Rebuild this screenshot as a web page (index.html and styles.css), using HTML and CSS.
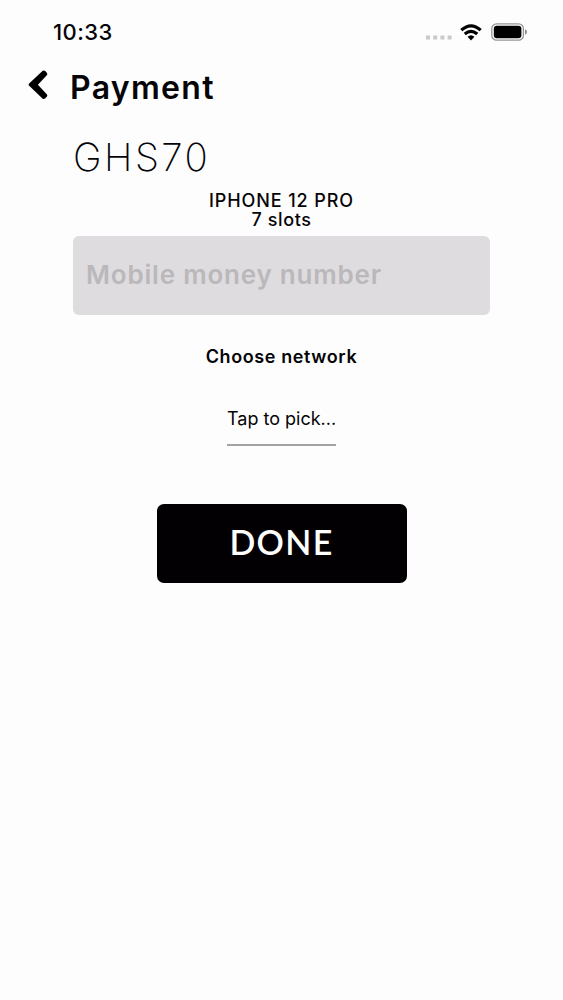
FILE: index.html
```html
<!DOCTYPE html>
<html lang="en">
<head>
<meta charset="utf-8">
<title>Payment</title>
<link rel="stylesheet" href="styles.css">
</head>
<body>
<header class="status">
  <span class="time">10:33</span>
  <div class="indicators">
    <svg class="signal" width="26" height="5" viewBox="0 0 26 5" fill="#cacaca"><path d="M0 .5h4v4H0zM7.2 .5h4v4h-4zM14.4 .5h4v4h-4zM21.6 .5h4v4h-4z"/></svg>
    <svg class="wifi" width="22" height="17" viewBox="0 0 22 17"><g fill="none" stroke="#000" stroke-width="3.2"><path d="M1.3 6.1Q11-2.5 20.7 6.1"/><path d="M4.8 10Q11 4.6 17.2 10"/></g><path d="M7.5 12.8Q11 9.8 14.5 12.8L11 16.4Z"/></svg>
    <svg class="battery" width="36" height="18" viewBox="0 0 36 18"><rect x=".8" y=".8" width="31.6" height="16.4" rx="4.8" fill="#fff" stroke="#969696" stroke-width="1.3"/><rect x="2.8" y="2.8" width="27.6" height="12.4" rx="3"/><path d="M34 6.3Q36 7 36 9T34 11.7Z" fill="#8c8c8c"/></svg>
  </div>
</header>
<nav class="nav">
  <svg class="back" width="22" height="30" viewBox="0 0 22 30"><path d="M15.7 .8Q17 0 18.2 1.1L20 2.9Q20.8 4.1 19.8 5.2L10.9 14.7 19.8 24.2Q20.8 25.2 20 26.4L18 28.6Q16.8 29.5 15.7 28.7L1.9 15.6Q1.1 14.7 1.9 13.8Z"/></svg>
  <h1 class="title">Payment</h1>
</nav>
<main class="content">
  <div class="amount">GHS70</div>
  <div class="product">IPHONE 12 PRO<br><span class="slots">7 slots</span></div>
  <div class="field"><span class="placeholder">Mobile money number</span></div>
  <div class="label">Choose network</div>
  <div class="picker">Tap to pick...</div>
  <button class="done">DONE</button>
</main>
</body>
</html>
```
FILE: styles.css
```css
* { box-sizing: border-box; }
body { margin: 0; width: 563px; height: 1000px; background: #fefdfe; color: #050407; font-family: Inter, sans-serif; overflow: hidden; white-space: nowrap; }
.status { display: flex; justify-content: space-between; height: 64px; padding: 19px 36px 0 53px; }
.time { font-size: 22px; line-height: 26px; font-weight: 500; letter-spacing: .4px; }
.indicators { display: flex; align-items: flex-start; }
.signal { margin: 16px 8px 0 0; }
.wifi { margin: 5px 9px 0 0; }
.battery { margin-top: 4px; }
.nav { display: flex; align-items: flex-start; height: 70px; padding: 6px 0 0 27px; }
.title { margin: 0 0 0 21px; font-size: 32px; line-height: 36px; font-weight: 600; letter-spacing: 1.3px; }
.content { display: flex; flex-direction: column; align-items: center; width: 417px; margin-left: 73px; }
.amount { align-self: flex-start; height: 57px; font-size: 38.5px; line-height: 47px; font-weight: 200; letter-spacing: 2.5px; }
.product { font-size: 18px; line-height: 19px; font-weight: 500; letter-spacing: .9px; text-align: center; }
.slots { letter-spacing: .6px; }
.field { display: flex; align-items: center; width: 417px; height: 79px; margin-top: 7px; padding: 0 0 1px 13px; border-radius: 6px; background: #dedcdf; }
.placeholder { color: #bab8bb; font-size: 26px; line-height: 30px; font-weight: 600; letter-spacing: .8px; }
.label { margin-top: 32px; font-size: 18px; line-height: 19px; font-weight: 600; letter-spacing: .6px; }
.picker { width: 109px; height: 41px; margin-top: 39px; border-bottom: 2px solid #a3a2a5; font-size: 18px; line-height: 28px; text-align: center; }
.done { width: 250px; height: 79px; margin-top: 58px; padding: 0 0 3px; border: 0; border-radius: 7px; background: #020003; color: #fff; font: 600 34px/40px Lato, sans-serif; letter-spacing: 1.3px; }
```
